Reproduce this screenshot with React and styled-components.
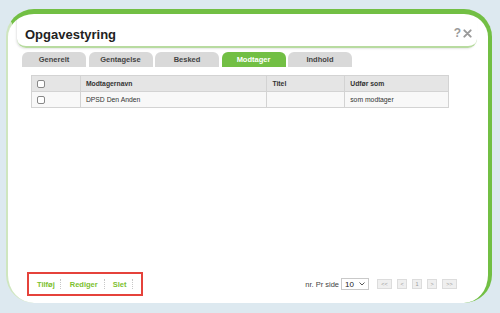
import React from 'react';
import styled, { createGlobalStyle } from 'styled-components';

const GlobalStyle = createGlobalStyle`
  html, body {
    margin: 0;
    padding: 0;
    background: #dde9f0;
  }
  body {
    font-family: 'Liberation Sans', Arial, sans-serif;
  }
`;

const green = '#72bf44';

// Outer page with the card in it
const Page = styled.div`
  width: 500px;
  height: 313px;
  box-sizing: border-box;
  padding: 9px 8px 10px 6px;
  background: #dde9f0;
`;

const Card = styled.div`
  height: 100%;
  box-sizing: border-box;
  background: #fff;
  border-top: 5px solid ${green};
  border-right: 4px solid ${green};
  border-left: 2px solid #cfe6bf;
  border-radius: 28px;
  display: flex;
  flex-direction: column;
  overflow: hidden;
`;

const TitleBar = styled.div`
  box-sizing: border-box;
  margin: 0 11px 0 9px;
  height: 34px;
  padding: 0 5px 5px 8px;
  display: flex;
  align-items: flex-end;
  justify-content: space-between;
  border-bottom: 2px solid #b8dba0;
  border-radius: 0 0 9px 9px;
  box-shadow: -1px 1px 2px rgba(0, 0, 0, 0.1);
`;

const Title = styled.h1`
  margin: 0;
  font-size: 13px;
  font-weight: bold;
  color: #222;
  line-height: 1;
`;

const Tools = styled.div`
  display: flex;
  align-items: center;
  gap: 2px;
  padding-bottom: 2px;
  color: #9a9a9a;
  font-size: 12px;
  font-weight: bold;
  line-height: 1;
`;

const Tabs = styled.div`
  display: flex;
  gap: 2.5px;
  margin: 4px 0 0 14px;
`;

const Tab = styled.div`
  width: 64px;
  height: 15px;
  display: flex;
  align-items: center;
  justify-content: center;
  border-radius: 6px 6px 0 0;
  font-size: 7.5px;
  font-weight: bold;
  background: ${p => (p.$active ? green : '#d9d9d9')};
  color: ${p => (p.$active ? '#fff' : '#444')};
`;

const Body = styled.div`
  flex: 1;
  padding: 8px 0 0 23px;
`;

const Table = styled.table`
  width: 418px;
  border-collapse: collapse;
  font-size: 6.8px;
  color: #333;
  td, th {
    border: 1px solid #d3d3d3;
    text-align: left;
    padding: 0 5px;
  }
`;

const HeadRow = styled.tr`
  height: 16px;
  background: #e5e5e5;
  th {
    font-weight: bold;
  }
`;

const DataRow = styled.tr`
  height: 16px;
  background: #f8f8f8;
`;

const Check = styled.span`
  display: inline-block;
  width: 6px;
  height: 6px;
  border: 1px solid #888;
  border-radius: 2px;
  background: #fff;
  vertical-align: middle;
`;

const Footer = styled.div`
  display: flex;
  align-items: center;
  justify-content: space-between;
  padding: 0 31px 7px 19px;
`;

const ActionBox = styled.div`
  width: 116px;
  height: 24px;
  box-sizing: border-box;
  border: 2px solid #e5423b;
  display: flex;
  align-items: center;
`;

const Action = styled.span`
  padding: 0 ${p => p.$pr}px 0 ${p => p.$pl}px;
  border-right: 1px dotted #c8c8c8;
  height: 10px;
  display: flex;
  align-items: center;
  font-size: 7.5px;
  font-weight: bold;
  color: #7cbf2e;
`;

const Pager = styled.div`
  display: flex;
  align-items: center;
  font-size: 7.5px;
  color: #444;
`;

const PerPage = styled.span`
  margin-right: 2px;
`;

const Select = styled.div`
  width: 28px;
  height: 12px;
  box-sizing: border-box;
  border: 1px solid #c9c9c9;
  background: #fff;
  display: flex;
  align-items: center;
  justify-content: space-between;
  padding: 0 3px;
  font-size: 8px;
  color: #222;
  margin-right: 3px;
`;

const PageButton = styled.span`
  width: ${p => (p.$wide ? '15px' : '10px')};
  height: 10px;
  box-sizing: border-box;
  border: 1px solid #dcdcdc;
  background: #efefef;
  color: #9a9a9a;
  font-size: 5.5px;
  display: flex;
  align-items: center;
  justify-content: center;
  margin-left: 5px;
  &:first-of-type { margin-left: 0; }
`;

const CloseIcon = () => (
  <svg width="9" height="9" viewBox="0 0 10 10">
    <path d="M1.5 1.5 L8.5 8.5 M8.5 1.5 L1.5 8.5" stroke="#9a9a9a" strokeWidth="2.2" strokeLinecap="round" />
  </svg>
);

const Chevron = () => (
  <svg width="6" height="4" viewBox="0 0 6 4">
    <path d="M0.5 0.5 L3 3 L5.5 0.5" stroke="#444" strokeWidth="0.9" fill="none" />
  </svg>
);

const tabs = ['Generelt', 'Gentagelse', 'Besked', 'Modtager', 'Indhold'];

const actions = [
  { label: 'Tilføj', pl: 8, pr: 5 },
  { label: 'Rediger', pl: 9, pr: 6 },
  { label: 'Slet', pl: 8, pr: 6 },
];

const App = () => {
  return (
    <Page>
      <GlobalStyle />
      <Card>
        <TitleBar>
          <Title>Opgavestyring</Title>
          <Tools>
            <span>?</span>
            <CloseIcon />
          </Tools>
        </TitleBar>
        <Tabs>
          {tabs.map(t => (
            <Tab key={t} $active={t === 'Modtager'}>{t}</Tab>
          ))}
        </Tabs>
        <Body>
          <Table>
            <colgroup>
              <col style={{ width: 49 }} />
              <col style={{ width: 187 }} />
              <col style={{ width: 78 }} />
              <col style={{ width: 104 }} />
            </colgroup>
            <thead>
              <HeadRow>
                <th><Check /></th>
                <th>Modtagernavn</th>
                <th>Titel</th>
                <th>Udfør som</th>
              </HeadRow>
            </thead>
            <tbody>
              <DataRow>
                <td><Check /></td>
                <td>DPSD Den Anden</td>
                <td></td>
                <td>som modtager</td>
              </DataRow>
            </tbody>
          </Table>
        </Body>
        <Footer>
          <ActionBox>
            {actions.map(a => (
              <Action key={a.label} $pl={a.pl} $pr={a.pr}>{a.label}</Action>
            ))}
          </ActionBox>
          <Pager>
            <PerPage>nr. Pr side</PerPage>
            <Select>
              <span>10</span>
              <Chevron />
            </Select>
            <PageButton $wide>&lt;&lt;</PageButton>
            <PageButton>&lt;</PageButton>
            <PageButton>1</PageButton>
            <PageButton>&gt;</PageButton>
            <PageButton $wide>&gt;&gt;</PageButton>
          </Pager>
        </Footer>
      </Card>
    </Page>
  );
};

export default App;
